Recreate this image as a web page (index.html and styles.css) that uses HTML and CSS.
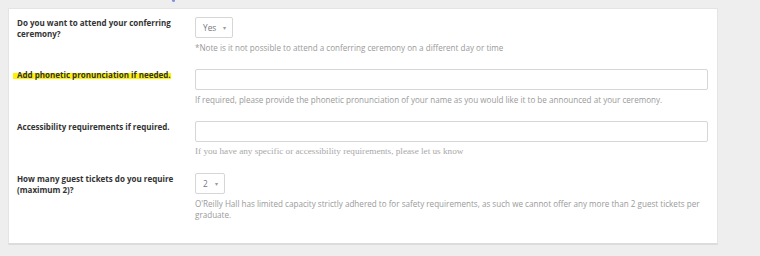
FILE: index.html
```html
<!DOCTYPE html>
<html>
<head>
<meta charset="utf-8">
<link rel="stylesheet" href="styles.css">
</head>
<body>
<div class="page">
  <div class="topbar"><span class="topmark"></span></div>
  <div class="card">
    <div class="row">
      <div class="label">Do you want to attend your conferring ceremony?</div>
      <div class="field">
        <div class="select sel-yes"><span>Yes</span><span class="caret">&#9662;</span></div>
        <div class="help">*Note is it not possible to attend a conferring ceremony on a different day or time</div>
      </div>
    </div>
    <div class="row">
      <div class="label"><span class="mark">Add phonetic pronunciation if needed.</span></div>
      <div class="field">
        <div class="input"></div>
        <div class="help">If required, please provide the phonetic pronunciation of your name as you would like it to be announced at your ceremony.</div>
      </div>
    </div>
    <div class="row">
      <div class="label">Accessibility requirements if required.</div>
      <div class="field">
        <div class="input"></div>
        <div class="help help-serif">If you have any specific or accessibility requirements, please let us know</div>
      </div>
    </div>
    <div class="row">
      <div class="label">How many guest tickets do you require (maximum 2)?</div>
      <div class="field">
        <div class="select sel-num"><span>2</span><span class="caret">&#9662;</span></div>
        <div class="help">O'Reilly Hall has limited capacity strictly adhered to for safety requirements, as such we cannot offer any more than 2 guest tickets per graduate.</div>
      </div>
    </div>
  </div>
</div>
</body>
</html>
```

FILE: styles.css
```css
html, body {
  margin: 0;
  padding: 0;
  background: #eeeeee;
}
body {
  font-family: "Open Sans", "Liberation Sans", sans-serif;
  width: 760px;
  height: 256px;
  overflow: hidden;
}
.page {
  padding: 0 0 0 8px;
}
.topbar {
  height: 8px;
}
.topmark {
  display: block;
  margin-left: 164px;
  width: 3px;
  height: 2px;
  background: #7b93e0;
  border-radius: 0 0 2px 2px;
}
.card {
  width: 710px;
  background: #fff;
  border: 1px solid #e4e4e4;
  border-bottom: 2px solid #dcdcdc;
  padding: 8px 0 26px 0;
  box-sizing: border-box;
  height: 237px;
}
.row {
  display: grid;
  grid-template-columns: 186px 513px;
  margin-bottom: 16px;
}
.label {
  padding-left: 8px;
  padding-right: 12px;
  font-size: 8px;
  font-weight: 700;
  line-height: 11px;
  color: #333;
}
.mark {
  background: linear-gradient(to bottom, transparent 40%, #fff200 40%, #fff200 90%, transparent 90%);
  padding-left: 4px;
  margin-left: -4px;
}
.field {
  display: flex;
  flex-direction: column;
  align-items: flex-start;
}
.input {
  width: 513px;
  height: 21px;
  border: 1px solid #d6d6d6;
  border-radius: 2px;
  box-sizing: border-box;
  background: #fff;
}
.select {
  height: 21px;
  border: 1px solid #d6d6d6;
  border-radius: 2px;
  box-sizing: border-box;
  display: flex;
  align-items: center;
  font-size: 8.3px;
  color: #777;
  padding-left: 7px;
}
.sel-yes { width: 38px; }
.sel-num { width: 30px; }
.caret {
  font-size: 6px;
  color: #999;
  margin-left: auto;
  margin-right: 6px;
}
.help {
  margin-top: 4px;
  font-size: 8.1px;
  line-height: 11px;
  color: #9a9a9a;
}
.help-serif {
  font-family: "Liberation Serif", serif;
  font-size: 9.2px;
  color: #a8a8a8;
}
```
